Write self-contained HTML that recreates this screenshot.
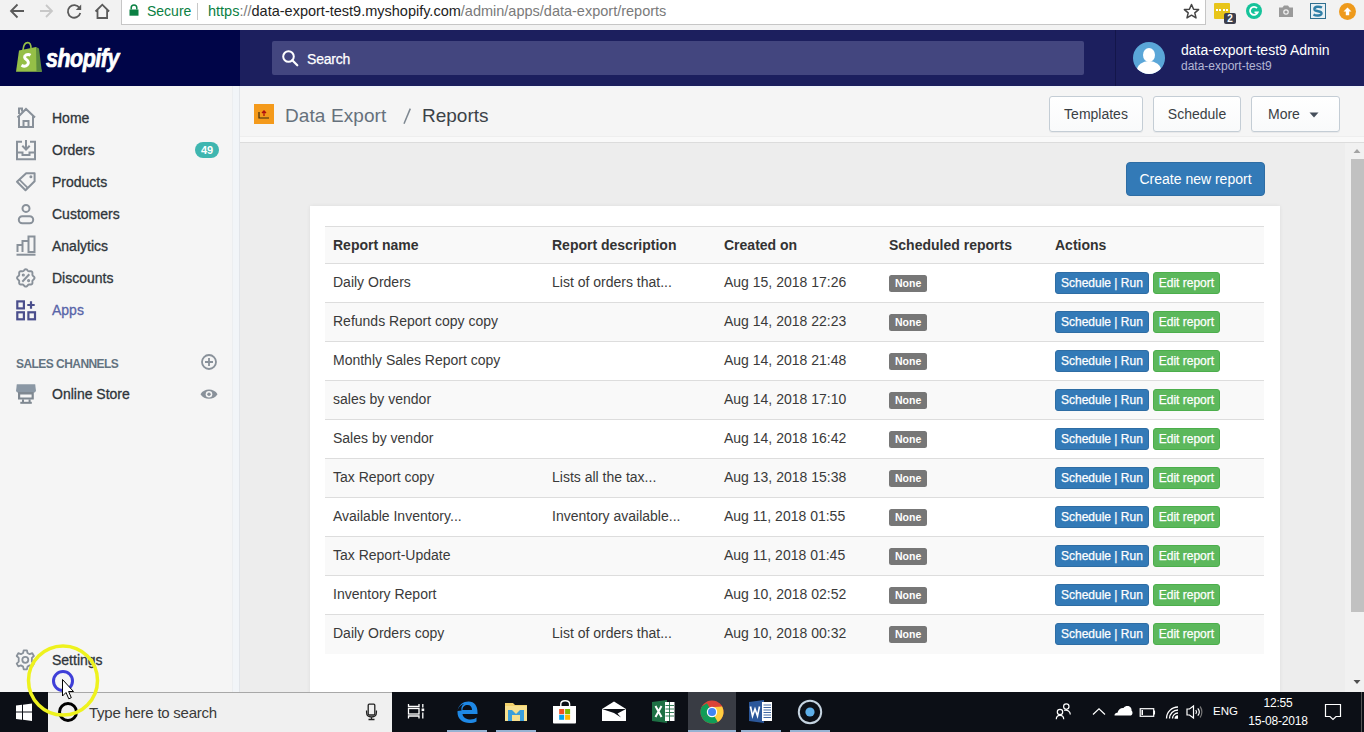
<!DOCTYPE html>
<html><head><meta charset="utf-8">
<style>
*{box-sizing:border-box;margin:0;padding:0}
html,body{width:1364px;height:732px;overflow:hidden;background:#ededed;font-family:"Liberation Sans",sans-serif}
.a{position:absolute}
svg{position:absolute;overflow:visible}
#chrome{left:0;top:0;width:1364px;height:30px;background:#f2f2f2}
#omni{left:121px;top:-3px;width:1085px;height:28px;background:#fff;border:1px solid #c6c6c6;border-top:none}
.url{left:208px;top:3px;font-size:14.5px;line-height:16px;white-space:nowrap;color:#7a7a7a}
#topL{left:0;top:30px;width:240px;height:56px;background:#000548}
#topR{left:240px;top:30px;width:1124px;height:56px;background:#1c1f5e}
#search{left:272px;top:41px;width:812px;height:34px;background:#43467f;border-radius:2px}
#side{left:0;top:86px;width:240px;height:606px;background:#f5f5f5;border-right:1px solid #e2e5e9}
.nav{left:52px;font-size:14px;line-height:16px;color:#2f353b;font-weight:normal;white-space:nowrap;-webkit-text-stroke:0.3px #2f353b}
#apphdr{left:240px;top:86px;width:1124px;height:57px;background:#f5f5f5;border-bottom:1px solid #dcdcdc;box-shadow:inset 0 -5px 0 #f9f9f9,inset 0 -6px 0 #eeeeee,inset 0 2px 0 #f0f3fa}
#content{left:240px;top:143px;width:1107px;height:549px;background:#ededed}
#scroll{left:1345px;top:143px;width:19px;height:549px;background:#f1f1f1}
#thumb{left:1351px;top:159px;width:13px;height:453px;background:#c1c1c1}
#card{left:310px;top:206px;width:970px;height:500px;background:#fff;box-shadow:0 0 4px rgba(0,0,0,.07)}
#task{left:0;top:692px;width:1364px;height:40px;background:#0c0f16}
.hbtn{top:96px;height:36px;border:1px solid #c4cdd5;border-radius:3px;background:linear-gradient(#fff,#f9fafb);box-shadow:0 1px 0 rgba(22,29,37,.05);font-size:14px;line-height:34px;color:#3a3f44;text-align:center}
table{position:absolute;left:325px;top:226px;width:939px;border-collapse:collapse;font-size:14px;color:#333;table-layout:fixed}
th{text-align:left;font-weight:bold;height:37px;padding:0 8px;background:#f9f9f9;border-top:1px solid #ddd;border-bottom:1px solid #ddd;vertical-align:middle}
td{height:39px;padding:0 8px 2px;color:#3a3a3a;border-top:1px solid #ddd;vertical-align:middle;white-space:nowrap;overflow:hidden}
tr.odd td{background:#f9f9f9}
.lbl{display:inline-block;background:#777;color:#fff;font-size:10.5px;font-weight:bold;line-height:16.5px;height:17px;padding:0 6px;border-radius:2.5px;vertical-align:middle;position:relative;top:1px}
.btn{display:inline-block;font-size:12px;line-height:18px;padding:1px 5px;border-radius:3px;color:#fff;border:1px solid;vertical-align:middle;-webkit-text-stroke:0.25px #fff;position:relative;top:1px}
.bp{background:#337ab7;border-color:#2e6da4}
.bs{background:#5cb85c;border-color:#4cae4c}
</style></head><body>
<!-- browser chrome -->
<div id="chrome" class="a"></div>
<svg style="left:0;top:0" width="120" height="30">
 <g fill="none" stroke="#5a5a5a" stroke-width="1.8">
  <path d="M11 11H24 M17.5 4.5L11 11L17.5 17.5"/>
 </g>
 <g fill="none" stroke="#c8c8c8" stroke-width="1.8">
  <path d="M40 11H52 M46 5L52 11L46 17"/>
 </g>
 <g fill="none" stroke="#5a5a5a" stroke-width="1.8">
  <path d="M79.5 8A6.3 6.3 0 1 0 80.3 13"/>
  <path d="M80.5 4.5V9.2H75.8" stroke-width="0"/>
 </g>
 <path d="M81.2 4.6L81.2 10L75.8 10Z" fill="#5a5a5a"/>
 <path d="M95.5 11.5L102.3 4.7L109.1 11.5M97.5 10V18H107.1V10" fill="none" stroke="#5a5a5a" stroke-width="1.8"/>
</svg>
<div id="omni" class="a"></div>
<svg style="left:129px;top:4px" width="10" height="12"><path d="M2.2 5.5V3.8A2.8 2.8 0 0 1 7.8 3.8V5.5" fill="none" stroke="#0b8043" stroke-width="1.5"/><rect x="0.5" y="5.5" width="9" height="6.2" fill="#0b8043"/></svg>
<div class="a" style="left:147px;top:3px;font-size:14px;line-height:16px;color:#0b8043">Secure</div>
<div class="a" style="left:197px;top:3px;width:1px;height:17px;background:#c8c8c8"></div>
<div class="a url"><span style="color:#0b8043">https</span>://<span style="color:#222">data-export-test9.myshopify.com</span>/admin/apps/data-export/reports</div>
<svg style="left:1183px;top:3px" width="18" height="18"><path d="M8.5 1.5L10.6 6.3L15.6 6.6L11.8 9.9L13 14.9L8.5 12.2L4 14.9L5.2 9.9L1.4 6.6L6.4 6.3Z" fill="none" stroke="#444" stroke-width="1.5" stroke-linejoin="round"/></svg>
<!-- extensions -->
<div class="a" style="left:1214px;top:3px;width:16px;height:16px;background:#e8c51a;border-radius:1px"></div>
<div class="a" style="left:1216px;top:9px;width:12px;height:3px;border-top:2px dotted #fff"></div>
<div class="a" style="left:1224px;top:13px;width:12px;height:11px;background:#3d3f4d;border-radius:2px;color:#fff;font-size:10px;line-height:11px;text-align:center;font-weight:bold">2</div>
<div class="a" style="left:1246px;top:3px;width:16px;height:16px;background:#15c39a;border-radius:50%"></div>
<svg style="left:1246px;top:3px" width="16" height="16"><path d="M11 5.2A4 4 0 1 0 11.8 9.3H8.5" fill="none" stroke="#fff" stroke-width="1.8"/></svg>
<svg style="left:1278px;top:4px" width="16" height="14"><path d="M1 3.5H4.5L6 1.5H10L11.5 3.5H15V13H1Z" fill="#9a9a9a"/><circle cx="8" cy="8" r="2.8" fill="#f2f2f2"/><circle cx="8" cy="8" r="1.6" fill="#9a9a9a"/></svg>
<div class="a" style="left:1310px;top:3px;width:16px;height:16px;background:#e8f0f4;border:1.5px solid #2f6f8f"></div>
<svg style="left:1310px;top:3px" width="16" height="16"><path d="M12 4.5C9 3 4 3.5 4.5 6.5C5 9 12 7.5 11.5 10.5C11 13 6 13 3.5 11.5" fill="none" stroke="#2f7fa7" stroke-width="2.5"/></svg>
<div class="a" style="left:1339px;top:3px;width:17px;height:17px;background:#ee9a1c;border-radius:50%"></div>
<svg style="left:1339px;top:3px" width="17" height="17"><path d="M8.5 4.5L12.5 8.5H10.2V12.2H6.8V8.5H4.5Z" fill="#fff"/></svg>

<!-- shopify top bar -->
<div id="topL" class="a"></div>
<div id="topR" class="a"></div>
<div class="a" style="left:1115px;top:30px;width:1px;height:56px;background:#13164a"></div>
<svg style="left:0;top:30px" width="44" height="56">
 <path d="M19 20.5L36 17L41.8 41.8L16 41.8Z" fill="#95bf47"/>
 <path d="M36 17L39 18.5L41.8 41.8L36.5 41.8Z" fill="#5e8e3e"/>
 <path d="M23 20C23.5 15 25.5 12.5 27.8 12.6C30 12.7 31 15.5 31 18.5" fill="none" stroke="#95bf47" stroke-width="1.6"/>
 <path d="M30.5 25.3C29.3 24.5 27.5 24.4 26 25C24 25.9 24.2 28.2 26.3 29.5C28.6 31 29 33.3 27.3 35C25.8 36.5 23.3 36.4 21.5 35.3" fill="none" stroke="#fff" stroke-width="3"/>
</svg>
<div class="a" style="left:46px;top:44px;font-size:25px;line-height:28px;font-weight:bold;font-style:italic;color:#fff;letter-spacing:-0.6px;transform:scaleX(0.86);transform-origin:0 0;-webkit-text-stroke:0.7px #fff">shopify</div>
<div id="search" class="a"></div>
<svg style="left:281px;top:49px" width="20" height="20"><circle cx="7.5" cy="7.5" r="5.3" fill="none" stroke="#fff" stroke-width="2"/><path d="M11.3 11.3L16.3 16.3" stroke="#fff" stroke-width="2.2" stroke-linecap="round"/></svg>
<div class="a" style="left:307px;top:51px;font-size:14px;line-height:16px;color:#fff;letter-spacing:-0.2px;-webkit-text-stroke:0.25px #fff">Search</div>
<div class="a" style="left:1133px;top:42px;width:32px;height:32px;border-radius:50%;background:#5aa6d8;overflow:hidden">
 <div class="a" style="left:10px;top:6px;width:12px;height:14px;border-radius:50%;background:#fff"></div>
 <div class="a" style="left:4px;top:19px;width:24px;height:18px;border-radius:50% 50% 0 0;background:#fff"></div>
</div>
<div class="a" style="left:1181px;top:42px;font-size:14px;line-height:16px;color:#fff;white-space:nowrap">data-export-test9 Admin</div>
<div class="a" style="left:1181px;top:59px;font-size:12px;line-height:14px;color:#b4b6d4;white-space:nowrap">data-export-test9</div>

<!-- sidebar -->
<div id="side" class="a"></div>
<div class="a" style="left:232px;top:86px;width:7px;height:606px;background:#f2f5f8;border-left:1px solid #eceef0"></div>
<svg style="left:0;top:86px" width="240" height="606">
 <g fill="none" stroke="#89919a" stroke-width="2">
  <!-- home -->
  <path d="M17.5 31.5L26 23L35 31.5 M19 30V41H33V30 M23.5 41V35H28.5V41 M19 28V22.5H22V25.5"/>
  <!-- orders -->
  <path d="M22 55.8H17V73.2H35V55.8H30 M17 66.6H22.5V69H29.5V66.6H35 M26 54V63.5 M22.3 59.8L26 63.5L29.7 59.8"/>
  <!-- products -->
  <path d="M26.2 87.2H34.6V95.2L25.5 104.3L17 95.8Z" stroke-linejoin="round"/>
  <path d="M19.4 93.6L27.7 101.9" stroke-width="1.7"/>
  <circle cx="30.9" cy="90.8" r="0.7" stroke-width="1.6"/>
  <!-- customers -->
  <circle cx="26" cy="122.4" r="3.5"/>
  <rect x="18.8" y="130.2" width="14.4" height="7" rx="3.5"/>
  <!-- analytics -->
  <path d="M17.5 166V159H22.5V166 M22.5 166V155H28.5V166 M28.5 166V150.5H34.5V166Z" stroke-width="2"/>
  <path d="M16.5 168.7H35.5"/>
  <!-- discounts -->
  <path d="M34.55 191.90 L34.43 192.47 L34.10 192.99 L33.65 193.46 L33.17 193.87 L32.76 194.26 L32.50 194.67 L32.39 195.15 L32.40 195.71 L32.45 196.34 L32.44 197.00 L32.30 197.60 L31.99 198.09 L31.50 198.40 L30.90 198.54 L30.24 198.55 L29.61 198.50 L29.05 198.49 L28.57 198.60 L28.16 198.86 L27.77 199.27 L27.36 199.75 L26.89 200.20 L26.37 200.53 L25.80 200.65 L25.23 200.53 L24.71 200.20 L24.24 199.75 L23.83 199.27 L23.44 198.86 L23.03 198.60 L22.55 198.49 L21.99 198.50 L21.36 198.55 L20.70 198.54 L20.10 198.40 L19.61 198.09 L19.30 197.60 L19.16 197.00 L19.15 196.34 L19.20 195.71 L19.21 195.15 L19.10 194.67 L18.84 194.26 L18.43 193.87 L17.95 193.46 L17.50 192.99 L17.17 192.47 L17.05 191.90 L17.17 191.33 L17.50 190.81 L17.95 190.34 L18.43 189.93 L18.84 189.54 L19.10 189.13 L19.21 188.65 L19.20 188.09 L19.15 187.46 L19.16 186.80 L19.30 186.20 L19.61 185.71 L20.10 185.40 L20.70 185.26 L21.36 185.25 L21.99 185.30 L22.55 185.31 L23.03 185.20 L23.44 184.94 L23.83 184.53 L24.24 184.05 L24.71 183.60 L25.23 183.27 L25.80 183.15 L26.37 183.27 L26.89 183.60 L27.36 184.05 L27.77 184.53 L28.16 184.94 L28.57 185.20 L29.05 185.31 L29.61 185.30 L30.24 185.25 L30.90 185.26 L31.50 185.40 L31.99 185.71 L32.30 186.20 L32.44 186.80 L32.45 187.46 L32.40 188.09 L32.39 188.65 L32.50 189.13 L32.76 189.54 L33.17 189.93 L33.65 190.34 L34.10 190.81 L34.43 191.33Z" stroke-width="1.9"/>
  <path d="M22.3 195.8L29.3 188.2"/>
  <circle cx="23.3" cy="189" r="0.7" stroke-width="1.8"/>
  <circle cx="28.6" cy="194.6" r="0.7" stroke-width="1.8"/>
 </g>
 <!-- apps -->
 <g fill="none" stroke="#4a4e8c" stroke-width="2.2">
  <rect x="17.3" y="215.4" width="6.6" height="7"/>
  <rect x="17.3" y="226.3" width="6.6" height="7"/>
  <rect x="28.4" y="226.3" width="6.6" height="7"/>
  <path d="M31 215.2V222.8 M27.3 219H34.7"/>
 </g>
 <!-- plus circle -->
 <g fill="none" stroke="#89919a" stroke-width="1.8">
  <circle cx="209" cy="276" r="7"/>
  <path d="M205 276H213 M209 272V280"/>
 </g>
 <!-- online store -->
 <path d="M16.8 298.2H35.2L35.9 304.2C35.9 305.8 35 306.6 33.6 306.6H18.4C17 306.6 16.1 305.8 16.1 304.2Z" fill="#8b98a5"/>
 <path d="M18 306H33.8V313.5H18Z M20.2 308.6V311.6H31.6V308.6Z" fill="#7f8891" fill-rule="evenodd"/>
 <rect x="22" y="313.4" width="2" height="2.6" fill="#7f8891"/>
 <rect x="28.6" y="313.4" width="2" height="2.6" fill="#7f8891"/>
 <rect x="20.3" y="315.8" width="11.5" height="2" fill="#7f8891"/>
 <!-- eye -->
 <path d="M200.5 308.2C204 302 214 302 217.5 308.2C214 314.4 204 314.4 200.5 308.2Z" fill="#89919a"/>
 <circle cx="209" cy="308.2" r="3.3" fill="#f5f5f5"/>
 <circle cx="209" cy="308.2" r="1.7" fill="#89919a"/>
 <!-- gear -->
 <g transform="translate(25.3 573.8)">
  <path d="M-1.6 -9.5H1.6L2.2 -6.8L4.4 -5.6L7 -6.6L8.6 -3.8L6.6 -1.9V1.9L8.6 3.8L7 6.6L4.4 5.6L2.2 6.8L1.6 9.5H-1.6L-2.2 6.8L-4.4 5.6L-7 6.6L-8.6 3.8L-6.6 1.9V-1.9L-8.6 -3.8L-7 -6.6L-4.4 -5.6L-2.2 -6.8Z" fill="none" stroke="#89919a" stroke-width="1.8" stroke-linejoin="round"/>
  <circle r="3" fill="none" stroke="#89919a" stroke-width="1.8"/>
 </g>
</svg>
<div class="a nav" style="top:110px">Home</div>
<div class="a nav" style="top:142px">Orders</div>
<div class="a" style="left:195px;top:142px;width:24px;height:16px;border-radius:8px;background:#3fb6b0;color:#fff;font-size:11px;line-height:16px;text-align:center;font-weight:bold">49</div>
<div class="a nav" style="top:174px">Products</div>
<div class="a nav" style="top:206px">Customers</div>
<div class="a nav" style="top:238px">Analytics</div>
<div class="a nav" style="top:270px">Discounts</div>
<div class="a nav" style="top:302px;color:#5864a8;-webkit-text-stroke:0.3px #5864a8">Apps</div>
<div class="a" style="left:16px;top:357px;font-size:12px;line-height:14px;font-weight:bold;color:#637381;letter-spacing:-0.55px;white-space:nowrap">SALES CHANNELS</div>
<div class="a nav" style="top:386px">Online Store</div>
<div class="a nav" style="top:652px">Settings</div>

<!-- app header -->
<div id="apphdr" class="a"></div>
<div class="a" style="left:254px;top:104px;width:20px;height:20px;background:#f49a1b"></div>
<svg style="left:254px;top:104px" width="20" height="20"><path d="M5 8V14H15" fill="none" stroke="#3a2a10" stroke-width="1.2"/><path d="M10 12V7 M8 9L10 7L12 9" fill="none" stroke="#b01010" stroke-width="1.3"/></svg>
<div class="a" style="left:285px;top:105px;font-size:19px;line-height:22px;color:#66717c;white-space:nowrap;letter-spacing:0.1px">Data Export</div>
<svg style="left:400px;top:105px" width="14" height="22"><path d="M4 18.7L10.3 3.6" stroke="#7d8790" stroke-width="1.5"/></svg>
<div class="a" style="left:422px;top:105px;font-size:19px;line-height:22px;color:#3c4248">Reports</div>
<div class="a hbtn" style="left:1049px;width:94px">Templates</div>
<div class="a hbtn" style="left:1153px;width:88px">Schedule</div>
<div class="a hbtn" style="left:1251px;width:89px;text-align:left;padding-left:16px">More</div>
<svg style="left:1309px;top:112px" width="10" height="6"><path d="M0.5 0.5H9.5L5 5.5Z" fill="#454f5b"/></svg>

<!-- content -->
<div id="content" class="a"></div>
<div id="scroll" class="a"></div>
<svg style="left:1347px;top:143px" width="17" height="549"><path d="M6.5 10L10 6L13.5 10Z" fill="#a3a3a3"/><path d="M6.5 537L10 541L13.5 537Z" fill="#505050"/></svg>
<div id="thumb" class="a"></div>
<div class="a" style="left:1126px;top:162px;width:139px;height:34px;background:#337ab7;border:1px solid #2e6da4;border-radius:4px;color:#fff;font-size:14px;line-height:32px;text-align:center">Create new report</div>
<div id="card" class="a"></div>
<table>
<colgroup><col style="width:219px"><col style="width:172px"><col style="width:165px"><col style="width:166px"><col style="width:217px"></colgroup>
<tr><th>Report name</th><th>Report description</th><th>Created on</th><th>Scheduled reports</th><th>Actions</th></tr>
<tr><td>Daily Orders</td><td>List of orders that...</td><td>Aug 15, 2018 17:26</td><td><span class="lbl">None</span></td><td><span class="btn bp">Schedule | Run</span> <span class="btn bs">Edit report</span></td></tr>
<tr class="odd"><td>Refunds Report copy copy</td><td></td><td>Aug 14, 2018 22:23</td><td><span class="lbl">None</span></td><td><span class="btn bp">Schedule | Run</span> <span class="btn bs">Edit report</span></td></tr>
<tr><td>Monthly Sales Report copy</td><td></td><td>Aug 14, 2018 21:48</td><td><span class="lbl">None</span></td><td><span class="btn bp">Schedule | Run</span> <span class="btn bs">Edit report</span></td></tr>
<tr class="odd"><td>sales by vendor</td><td></td><td>Aug 14, 2018 17:10</td><td><span class="lbl">None</span></td><td><span class="btn bp">Schedule | Run</span> <span class="btn bs">Edit report</span></td></tr>
<tr><td>Sales by vendor</td><td></td><td>Aug 14, 2018 16:42</td><td><span class="lbl">None</span></td><td><span class="btn bp">Schedule | Run</span> <span class="btn bs">Edit report</span></td></tr>
<tr class="odd"><td>Tax Report copy</td><td>Lists all the tax...</td><td>Aug 13, 2018 15:38</td><td><span class="lbl">None</span></td><td><span class="btn bp">Schedule | Run</span> <span class="btn bs">Edit report</span></td></tr>
<tr><td>Available Inventory...</td><td>Inventory available...</td><td>Aug 11, 2018 01:55</td><td><span class="lbl">None</span></td><td><span class="btn bp">Schedule | Run</span> <span class="btn bs">Edit report</span></td></tr>
<tr class="odd"><td>Tax Report-Update</td><td></td><td>Aug 11, 2018 01:45</td><td><span class="lbl">None</span></td><td><span class="btn bp">Schedule | Run</span> <span class="btn bs">Edit report</span></td></tr>
<tr><td>Inventory Report</td><td></td><td>Aug 10, 2018 02:52</td><td><span class="lbl">None</span></td><td><span class="btn bp">Schedule | Run</span> <span class="btn bs">Edit report</span></td></tr>
<tr class="odd"><td>Daily Orders copy</td><td>List of orders that...</td><td>Aug 10, 2018 00:32</td><td><span class="lbl">None</span></td><td><span class="btn bp">Schedule | Run</span> <span class="btn bs">Edit report</span></td></tr>
</table>

<!-- taskbar -->
<div id="task" class="a"></div>
<div class="a" style="left:48px;top:692px;width:344px;height:40px;background:#f0f0f0;border-top:1px solid #a8a8a8"></div>
<div class="a" style="left:89px;top:704px;font-size:15px;line-height:17px;color:#3a3a3a;white-space:nowrap;letter-spacing:-0.25px">Type here to search</div>
<div class="a" style="left:58px;top:702px;width:20px;height:20px;border:3px solid #000;border-radius:50%"></div>
<svg style="left:0;top:692px" width="1364" height="40">
 <!-- windows logo -->
 <g fill="#fff">
  <path d="M16 13.6L22 12.8V19.6H16Z"/>
  <path d="M23 12.7L32 11.6V19.6H23Z"/>
  <path d="M16 20.6H22V27.7L16 27.1Z"/>
  <path d="M23 20.6H32V28.9L23 27.8Z"/>
 </g>
 <!-- mic -->
 <g fill="none" stroke="#222" stroke-width="1.3">
  <rect x="368.2" y="12.2" width="6.6" height="10.8" rx="1"/>
  <path d="M366.6 18.5V20.5C366.6 23.5 368.5 25 371.5 25C374.5 25 376.4 23.5 376.4 20.5V18.5 M371.5 25V27.3 M368.5 27.5H374.5"/>
 </g>
 <!-- task view -->
 <g fill="none" stroke="#fff" stroke-width="1.3">
  <path d="M408.5 12V14.5H419V12"/>
  <rect x="408.5" y="16.5" width="10.5" height="5.5"/>
  <path d="M408.5 26.5V24H419V26.5"/>
  <path d="M422.8 12V15.5 M422.8 20.5V26.5"/>
 </g>
 <rect x="421.6" y="16.5" width="2.6" height="2.6" fill="#fff"/>
 <!-- edge -->
 <g transform="translate(467 20)">
  <path d="M-9.5 -1C-8.5 -7.5 -3.5 -10.5 1.5 -10.5C7.5 -10.5 10.5 -6 10.5 0.5V2H-4.5C-4 6 0 7.5 3.5 7.5C6 7.5 8.5 6.5 9.5 5.5V9.5C7.5 10.5 5 11 2.5 11C-4 11 -9.5 7 -9.5 0.5C-9.5 -4 -6.5 -7.5 -3 -8C-5.5 -6.5 -6 -3.5 -5.5 -1.5Z M-4.5 -2H5C5 -5 3.5 -7 0.5 -7C-2.5 -7 -4.5 -5 -4.5 -2Z" fill="#1e88e5" fill-rule="evenodd"/>
 </g>
 <!-- explorer -->
 <path d="M505 11H513L515 13H527V29H505Z" fill="#f2d16b"/>
 <path d="M505 14H527V29H505Z" fill="#f8e08e"/>
 <path d="M508 29V18H512L516 22L520 18H524V29H520V23H512V29Z" fill="#3b9fdc"/>
 <!-- store -->
 <path d="M553 14H576V30.5C576 31 575.5 31.5 575 31.5H554C553.5 31.5 553 31 553 30.5Z" fill="#fff"/>
 <path d="M560.8 14V12C560.8 9.5 562.3 8.8 565.2 8.8C568.1 8.8 569.6 9.5 569.6 12V14" fill="none" stroke="#fff" stroke-width="1.4"/>
 <rect x="559.2" y="17" width="5" height="5.2" fill="#f25022"/>
 <rect x="565.1" y="17" width="5" height="5.2" fill="#7fba00"/>
 <rect x="559.2" y="22.8" width="5" height="5" fill="#00a4ef"/>
 <rect x="565.1" y="22.8" width="5" height="5" fill="#ffb900"/>
 <!-- mail -->
 <path d="M602 17L614 9.5L626 17V29H602Z" fill="#fff"/>
 <path d="M602 17L626 17L617.5 21.5L621 25.5L614 21Z" fill="#0c0f16"/>
 <!-- excel -->
 <path d="M652 10L667 8V31L652 29Z" fill="#1e7145"/>
 <rect x="665" y="10" width="9.5" height="19" fill="#fff"/>
 <g stroke="#1e7145" stroke-width="0.9"><path d="M665.5 13.5H674 M665.5 17H674 M665.5 20.5H674 M665.5 24H674 M669.5 10V29"/></g>
 <path d="M655.5 14L661.5 25 M661.5 14L655.5 25" stroke="#fff" stroke-width="2"/>
 <!-- chrome (active) -->
 <rect x="688" y="0" width="48" height="38" fill="#393c44"/>
 <g transform="translate(712 20)">
  <circle r="11.5" fill="#db4437"/>
  <path d="M0 0L-9.96 5.75A11.5 11.5 0 0 1 -9.96 -5.75L-5 -8.7Z" fill="#0f9d58"/>
  <path d="M0 0L-9.96 5.75A11.5 11.5 0 0 0 5.75 9.96L5 2.5Z" fill="#0f9d58"/>
  <path d="M0 0L5.75 9.96A11.5 11.5 0 0 0 9.96 -5.75L0 -5Z" fill="#ffcd40"/>
  <path d="M-5 -8.7L0 -5L9.96 -5.75A11.5 11.5 0 0 0 -5 -8.7Z" fill="#db4437"/>
  <circle r="5.2" fill="#fff"/>
  <circle r="4" fill="#4285f4"/>
 </g>
 <!-- word -->
 <path d="M749 10L764 8V31L749 29Z" fill="#2b579a"/>
 <rect x="762" y="10" width="10" height="19" fill="#fff"/>
 <g stroke="#2b579a" stroke-width="0.9"><path d="M763.5 13H771 M763.5 15.5H771 M763.5 18H771 M763.5 20.5H771 M763.5 23H771 M763.5 25.5H771"/></g>
 <path d="M750.5 14.5L752.5 24L755 17L757.5 24L759.5 14.5" fill="none" stroke="#fff" stroke-width="1.6"/>
 <!-- cortana -->
 <circle cx="810" cy="20" r="11.2" fill="none" stroke="#c5d3e0" stroke-width="2"/>
 <circle cx="810" cy="20" r="4.6" fill="#5eaee8"/>
 <!-- underlines -->
 <g fill="#96b2d2">
  <rect x="447" y="38" width="40" height="2"/>
  <rect x="496" y="38" width="40" height="2"/>
  <rect x="688" y="38" width="48" height="2"/>
  <rect x="741" y="38" width="40" height="2"/>
  <rect x="790" y="38" width="40" height="2"/>
 </g>
 <!-- tray -->
 <g fill="none" stroke="#fff" stroke-width="1.2">
  <circle cx="1066.3" cy="14.6" r="2.7"/>
  <path d="M1064.2 18.3C1067.5 17.5 1070.3 19.5 1070.3 22.5"/>
  <circle cx="1060" cy="20" r="2.7"/>
  <path d="M1056.3 27.3C1056.3 24.8 1058 23.3 1060 23.3C1062 23.3 1063.7 24.8 1063.7 27.3"/>
  <path d="M1093 22.5L1099 16.8L1105 22.5"/>
  <rect x="1140.2" y="16.7" width="13.5" height="7.6"/>
  <path d="M1154.3 18.5V22.5" stroke-width="1.5"/>
  <path d="M1187 17H1189.5L1193.5 14V26L1189.5 23H1187Z"/>
  <path d="M1195.8 18C1196.8 19.3 1196.8 20.7 1195.8 22 M1197.8 16.3C1199.6 18.5 1199.6 21.5 1197.8 23.7"/>
  <path d="M1200 14.5C1202.5 17.5 1202.5 22.5 1200 25.5" stroke="#777"/>
 </g>
 <path d="M1141.5 18H1143V23H1141.5Z" fill="#fff"/>
 <path d="M1114.5 23.5C1114.5 21.5 1116 20.5 1117.5 20.7C1118.2 17.5 1120.8 15.7 1123.5 16C1125 14 1127.5 13.5 1129.5 14.5C1131 15.3 1131.8 17 1131.5 18.5C1132.8 19.3 1133 22.5 1131 23.5Z" fill="#fff"/>
 <path d="M1116 19.5C1117 16.5 1120 15 1122.3 15.5" fill="none" stroke="#0c0f16" stroke-width="1"/>
 <g fill="none" stroke="#fff" stroke-width="1.3">
  <path d="M1166.5 26.5A11.5 11.5 0 0 1 1178 15"/>
  <path d="M1169.5 26.5A8.5 8.5 0 0 1 1178 18"/>
  <path d="M1172.5 26.5A5.5 5.5 0 0 1 1178 21"/>
 </g>
 <path d="M1174.5 26.8A3.5 3.5 0 0 1 1178 23.3V26.8Z" fill="#fff"/>
 <path d="M1325.5 12.5H1340.5V24.5H1336L1333 27.5L1330 24.5H1325.5Z" fill="none" stroke="#fff" stroke-width="1.2"/>
 <rect x="1361" y="0" width="1" height="40" fill="#555"/>
</svg>
<div class="a" style="left:1213px;top:705px;font-size:11.5px;line-height:13px;color:#fff">ENG</div>
<div class="a" style="left:1249px;top:697px;width:58px;text-align:center;font-size:12px;line-height:13px;color:#fff;letter-spacing:-0.2px">12:55</div>
<div class="a" style="left:1239px;top:715px;width:78px;text-align:center;white-space:nowrap;font-size:12px;line-height:13px;color:#fff;letter-spacing:-0.2px">15-08-2018</div>

<!-- overlays: click highlight + cursor -->
<svg style="left:0;top:0" width="1364" height="732">
 <circle cx="63" cy="680.5" r="34.5" fill="none" stroke="#eef21e" stroke-width="3.5"/>
 <circle cx="63" cy="681" r="9.5" fill="none" stroke="#3f3fd8" stroke-width="3"/>
 <path d="M62.5 679.5V696L66 692.5L68.8 698.8L71.3 697.7L68.6 691.5H73.5Z" fill="#fff" stroke="#000" stroke-width="1"/>
</svg>
</body></html>
